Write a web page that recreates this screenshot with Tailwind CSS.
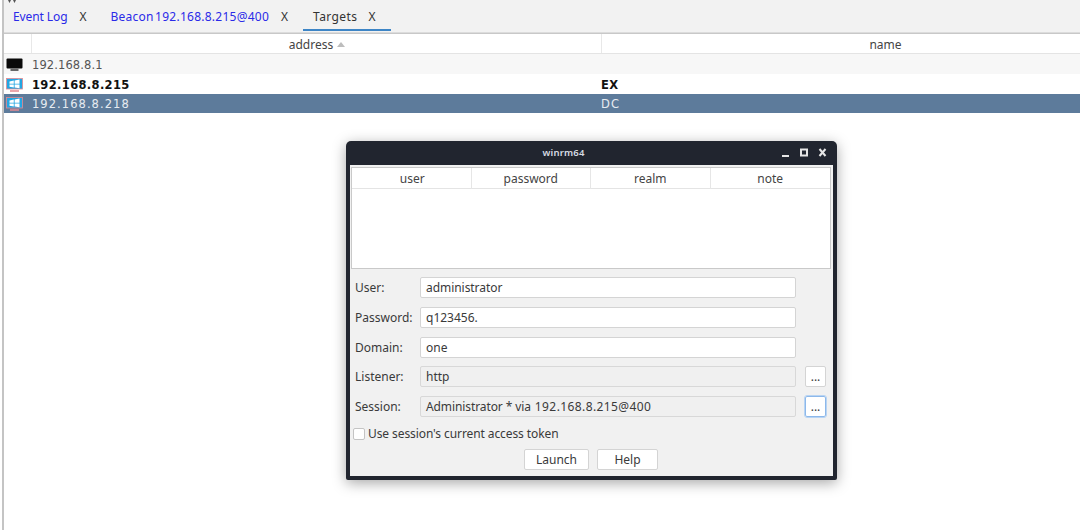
<!DOCTYPE html>
<html>
<head>
<meta charset="utf-8">
<script src="https://cdn.jsdelivr.net/npm/@tailwindcss/browser@4"></script>
</head>
<body class="m-0 bg-white">
<div class="relative w-[1080px] h-[530px] overflow-hidden bg-white font-['Noto_Sans',sans-serif] text-[12px] text-[#3a3a3a]">
  <!-- left frame -->
  <div class="flex h-full pl-[2px]">
    <div class="w-[2px] h-full bg-[#c4c4c4]"></div>
    <div class="flex-1 flex flex-col min-w-0">
      <!-- tabs -->
      <div class="relative h-[32px] bg-[#f2f2f2] flex items-start pl-[9px] pt-[7px] text-[12px] leading-[20px]">
        <svg class="absolute left-[2px] top-0" width="12" height="4" viewBox="0 0 12 4"><path d="M2 0 L5 0 L3.5 3 Z M7 0 L10 0 L8.5 3 Z" fill="#555"/></svg>
        <span class="text-[#2a2ae8] tracking-[-0.1px]">Event Log</span>
        <span class="ml-[12px] text-[#333]">X</span>
        <span class="ml-[24px] text-[#2a2ae8] tracking-[0.25px] [word-spacing:-2px]">Beacon 192.168.8.215@400</span>
        <span class="ml-[12px] text-[#333]">X</span>
        <div class="relative ml-[25px] flex">
          <span class="text-[#333] tracking-[0.4px]">Targets</span>
          <span class="ml-[11px] text-[#333]">X</span>
          <div class="absolute left-[-10px] right-[-16px] top-[22px] h-[2px] bg-[#3d85c6]"></div>
        </div>
      </div>
      <div class="h-[2px] bg-[#dcdcdc] border-b border-[#c8c8c8]"></div>
      <!-- table header -->
      <div class="h-[20px] flex bg-white border-b border-[#e4e4e4] leading-[21px] text-[#444]">
        <div class="w-[28px] shrink-0 border-r border-[#e8e8e8]"></div>
        <div class="w-[570px] shrink-0 border-r border-[#e8e8e8] pl-[1px] flex justify-center items-start gap-[4px]">
          <span>address</span>
          <svg class="mt-[8px]" width="8" height="5" viewBox="0 0 8 5"><path d="M0 5 L4 0 L8 5 Z" fill="#bdbdbd"/></svg>
        </div>
        <div class="w-[567px] shrink-0 text-center">name</div>
      </div>
      <!-- rows -->
      <div class="font-['DejaVu_Sans',sans-serif] text-[11.5px]">
        <div class="h-[20px] pt-[2px] flex items-center bg-[#f7f7f7] text-[#555] tracking-[0.1px]">
          <svg class="ml-[2px] w-[17px] h-[15px]" viewBox="0 0 17 15"><rect x="0.5" y="0.5" width="16" height="10" rx="1" fill="#0a0a0a"/><rect x="4.5" y="10.5" width="8" height="2.5" fill="#666"/></svg>
          <span class="ml-[9px] mt-[2px]">192.168.8.1</span>
        </div>
        <div class="h-[20px] pt-[2px] flex items-center bg-white text-[#111] font-bold tracking-[0.35px]">
          <svg class="ml-[2px] w-[17px] h-[15px]" viewBox="0 0 17 15"><rect x="0.5" y="0.5" width="16" height="10.5" fill="#24a6e2" stroke="#e58a92" stroke-width="0.8"/><path d="M3.5 3.4 L7.8 2.6 V5.7 H3.5 Z M8.6 2.5 L13.5 1.6 V5.7 H8.6 Z M3.5 6.4 H7.8 V9.4 L3.5 8.8 Z M8.6 6.4 H13.5 V10.2 L8.6 9.5 Z" fill="#fff"/><path d="M4 13 H13" stroke="#e58a92" stroke-width="1.5"/></svg>
          <span class="ml-[9px] mt-[2px] w-[569px] shrink-0">192.168.8.215</span>
          <span class="mt-[2px]">EX</span>
        </div>
        <div class="h-[19px] pt-[1px] flex items-center bg-[#5d7b9b] text-[#e6ebf1] tracking-[1.05px]">
          <svg class="ml-[2px] w-[17px] h-[15px]" viewBox="0 0 17 15"><rect x="0.5" y="0.5" width="16" height="10.5" fill="#24a6e2" stroke="#e58a92" stroke-width="0.8"/><path d="M3.5 3.4 L7.8 2.6 V5.7 H3.5 Z M8.6 2.5 L13.5 1.6 V5.7 H8.6 Z M3.5 6.4 H7.8 V9.4 L3.5 8.8 Z M8.6 6.4 H13.5 V10.2 L8.6 9.5 Z" fill="#fff"/><path d="M4 13 H13" stroke="#e58a92" stroke-width="1.5"/></svg>
          <span class="ml-[9px] mt-[2px] w-[569px] shrink-0">192.168.8.218</span>
          <span class="mt-[2px]">DC</span>
        </div>
      </div>
    </div>
  </div>

  <!-- dialog window -->
  <div class="absolute left-[346px] top-[141px] w-[491px] h-[339px] bg-[#21252f] rounded-t-[5px] rounded-b-[2px] shadow-[0_3px_14px_rgba(0,0,0,0.35)] flex flex-col px-[4px] pb-[4px]">
    <div class="relative h-[24px] shrink-0 flex items-center justify-center pr-[56px] text-[#d6dbe3] text-[9.5px] font-semibold tracking-[0.2px]">
      winrm64
      <div class="absolute right-[-4px] top-0 h-full flex items-center">
        <svg width="56" height="24" viewBox="0 0 56 24">
          <rect x="1" y="14" width="7" height="2" fill="#e6e6e6"/>
          <rect x="20" y="8.5" width="6" height="6" fill="none" stroke="#e6e6e6" stroke-width="2"/>
          <path d="M38.5 8 L44.5 15 M44.5 8 L38.5 15" stroke="#e6e6e6" stroke-width="2"/>
        </svg>
      </div>
    </div>
    <div class="flex-1 bg-[#f1f1f1] flex flex-col px-[1px] pt-[2px]">
      <!-- credentials table -->
      <div class="w-[480px] h-[102px] bg-white border border-[#c9c9c9] flex flex-col text-[12px] text-[#444]">
        <div class="h-[21px] grid grid-cols-4 border-b border-[#e4e4e4] leading-[21px] text-center">
          <div class="border-r border-[#e6e6e6] pl-[2px]">user</div>
          <div class="border-r border-[#e6e6e6]">password</div>
          <div class="border-r border-[#e6e6e6]">realm</div>
          <div>note</div>
        </div>
      </div>
      <!-- form -->
      <div class="flex flex-col gap-[8px] mt-[8px] pl-[4px] text-[12px] text-[#3a3a3a]">
        <div class="flex items-center h-[21px]">
          <span class="w-[65px]">User:</span>
          <div class="w-[376px] h-[21px] bg-white border border-[#d4d4d4] rounded-[2px] pl-[5px] leading-[19px] tracking-[-0.05px]">administrator</div>
        </div>
        <div class="flex items-center h-[21px] mt-[1px]">
          <span class="w-[65px]">Password:</span>
          <div class="w-[376px] h-[21px] bg-white border border-[#d4d4d4] rounded-[2px] pl-[5px] leading-[19px]">q123456.</div>
        </div>
        <div class="flex items-center h-[21px] mt-[1px]">
          <span class="w-[65px]">Domain:</span>
          <div class="w-[376px] h-[21px] bg-white border border-[#d4d4d4] rounded-[2px] pl-[5px] leading-[19px]">one</div>
        </div>
        <div class="flex items-center h-[21px]">
          <span class="w-[65px]">Listener:</span>
          <div class="w-[376px] h-[21px] bg-[#f0f0f0] border border-[#d8d8d8] rounded-[2px] pl-[5px] leading-[19px]">http</div>
          <div class="ml-[9px] w-[21px] h-[21px] bg-white border border-[#d4d4d4] rounded-[2px] text-center leading-[19px]">...</div>
        </div>
        <div class="flex items-center h-[21px] mt-[1px]">
          <span class="w-[65px]">Session:</span>
          <div class="w-[376px] h-[21px] bg-[#f0f0f0] border border-[#d8d8d8] rounded-[2px] pl-[5px] leading-[19px] whitespace-pre"><span class="tracking-[-0.1px]">Administrator * via</span><span class="ml-[4px] tracking-[0.4px]">192.168.8.215@400</span></div>
          <div class="ml-[9px] w-[21px] h-[21px] bg-white border border-[#8db8ea] outline outline-1 outline-[#b8d4f3] rounded-[2px] text-center leading-[19px]">...</div>
        </div>
      </div>
      <div class="flex items-center mt-[10px] pl-[2px] h-[14px]">
        <div class="w-[12px] h-[12px] bg-white border border-[#c4c4c4] rounded-[2px]"></div>
        <span class="ml-[3px] tracking-[-0.09px]">Use session's current access token</span>
      </div>
      <div class="flex justify-center gap-[8px] mt-[8px] pr-[2px]">
        <div class="w-[65px] h-[21px] bg-white border border-[#d4d4d4] rounded-[2px] pl-[1px] text-center leading-[19px]">Launch</div>
        <div class="w-[61px] h-[21px] bg-white border border-[#d4d4d4] rounded-[2px] pl-[1px] text-center leading-[19px]">Help</div>
      </div>
    </div>
  </div>
</div>
</body>
</html>
